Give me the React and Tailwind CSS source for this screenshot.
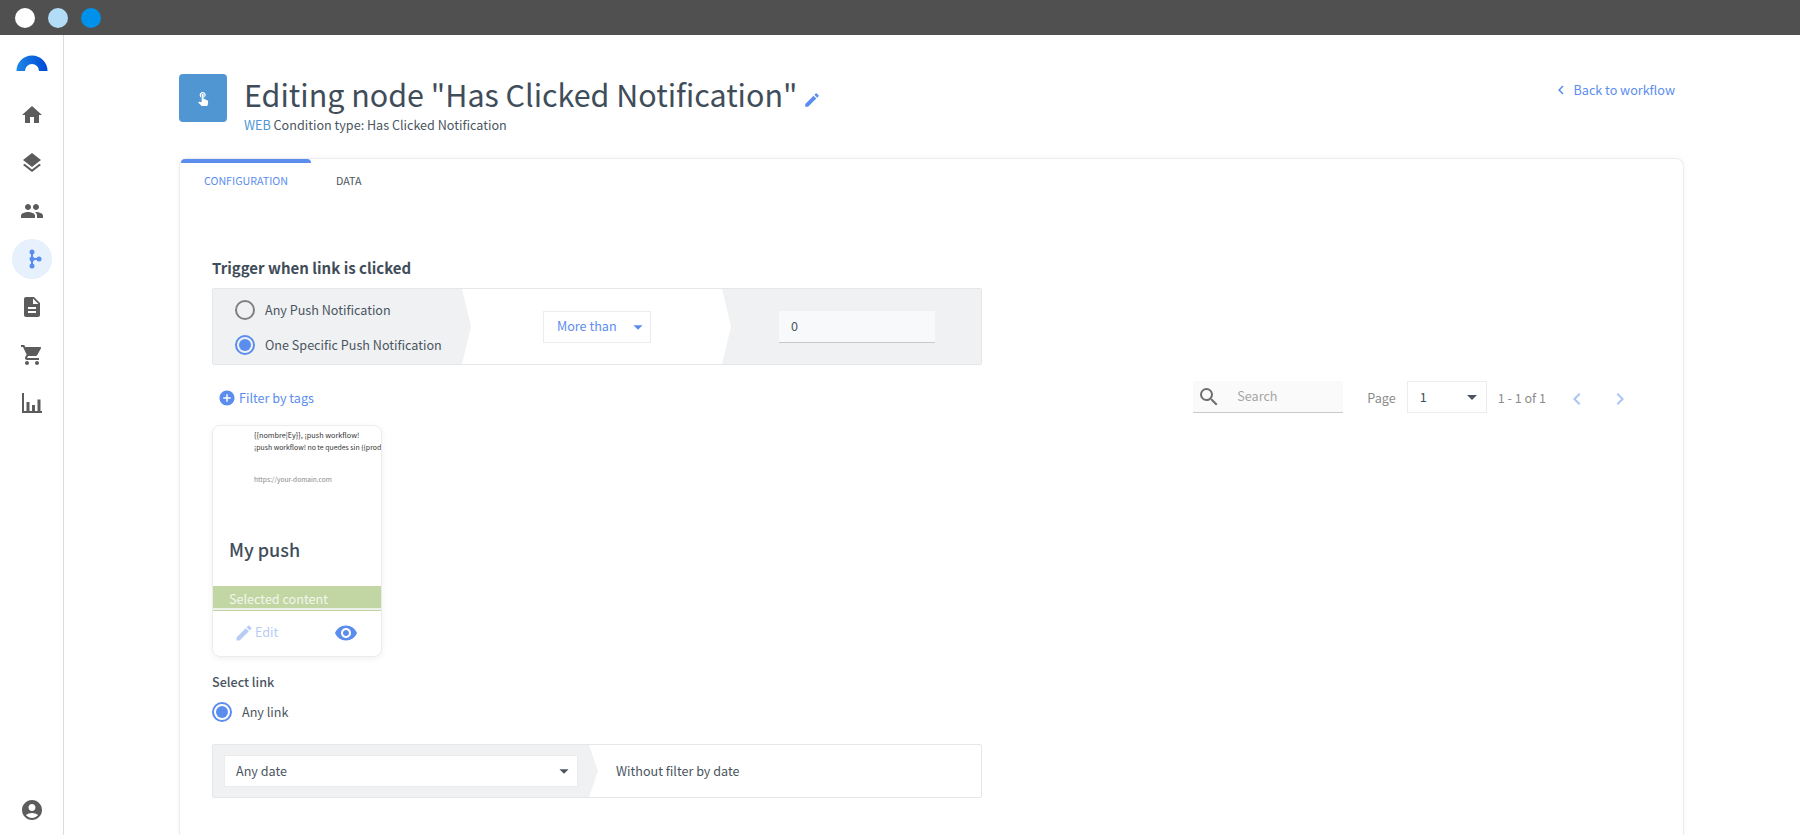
import React from "react";
import { MdHome, MdLayers, MdPeople, MdDescription, MdShoppingCart, MdAccountCircle, MdEdit, MdRemoveRedEye, MdAddCircle, MdSearch, MdChevronLeft, MdChevronRight, MdTouchApp, MdArrowDropDown } from "react-icons/md";

const Radio = ({ on }) => (
  <span className={`flex h-5 w-5 shrink-0 items-center justify-center rounded-full border-2 ${on ? "border-[#5b8def]" : "border-[#808080]"}`}>
    {on && <span className="h-3 w-3 rounded-full bg-[#5b8def]" />}
  </span>
);

const NavItem = ({ children, active }) => (
  <div className={`flex h-10 w-10 items-center justify-center rounded-full ${active ? "bg-[#e6f1fd]" : ""}`}>{children}</div>
);

const Tip = ({ color, back }) => (
  <div className={`w-[9px] shrink-0 ${back}`}>
    <div className={`h-full w-full ${color} [clip-path:polygon(0_0,100%_50%,0_100%)]`} />
  </div>
);

export default function App() {
  return (
    <div className="flex h-[835px] w-[1800px] flex-col overflow-hidden bg-white text-[12.6px] text-[#4a5560] [font-family:'Noto_Sans_CJK_SC','Noto_Sans',sans-serif]">
      <div className="flex h-[35px] shrink-0 items-center gap-[13px] bg-[#505050] pl-[15px]">
        <span className="h-5 w-5 rounded-full bg-white" />
        <span className="h-5 w-5 rounded-full bg-[#b3dcf7]" />
        <span className="h-5 w-5 rounded-full bg-[#0091ea]" />
      </div>
      <div className="flex min-h-0 flex-1">
        <aside className="flex w-[64px] shrink-0 flex-col items-center border-r border-[#dcdcdc] text-[#5c5c5c]">
          <svg width="32" height="16" viewBox="0 0 32 16" className="mt-[20px] mb-[24px] shrink-0">
            <defs>
              <linearGradient id="lg" x1="0" x2="1" y1="0" y2="0">
                <stop offset="0" stopColor="#1e88e5" />
                <stop offset="1" stopColor="#0047d6" />
              </linearGradient>
            </defs>
            <path d="M0.5 16A15.5 15.5 0 0 1 31.5 16H23A7 7 0 0 0 9 16Z" fill="url(#lg)" />
          </svg>
          <div className="flex flex-1 flex-col items-center gap-2">
            <NavItem><MdHome size={24} /></NavItem>
            <NavItem><MdLayers size={24} /></NavItem>
            <NavItem><MdPeople size={24} /></NavItem>
            <NavItem active>
              <svg width="20" height="20" viewBox="0 0 20 20" fill="#5b8def" stroke="#5b8def">
                <path d="M10 3V17M10 10H17" strokeWidth="2" fill="none" />
                <circle cx="10" cy="3" r="2.5" stroke="none" />
                <circle cx="10" cy="10" r="2.5" stroke="none" />
                <circle cx="10" cy="17" r="2.5" stroke="none" />
                <circle cx="17" cy="10" r="2.5" stroke="none" />
              </svg>
            </NavItem>
            <NavItem><MdDescription size={24} /></NavItem>
            <NavItem><MdShoppingCart size={24} /></NavItem>
            <NavItem>
              <svg width="20" height="20" viewBox="0 0 20 20" fill="currentColor">
                <path d="M0 0H2V18H20V20H0Z" />
                <path d="M4.5 9H7.5V18H4.5ZM10 12H13V18H10ZM15.5 6.5H18.5V18H15.5Z" />
              </svg>
            </NavItem>
          </div>
          <div className="mb-[5px]"><NavItem><MdAccountCircle size={24} /></NavItem></div>
        </aside>
        <main className="flex min-w-0 flex-1 flex-col pr-[116px] pl-[115px]">
          <header className="flex shrink-0 items-start pt-[39px]">
            <div className="flex h-12 w-12 shrink-0 items-center justify-center rounded-[4px] bg-[#5096d3] text-white"><MdTouchApp size={16} /></div>
            <div className="ml-[17px] min-w-0 flex-1">
              <div className="-mt-[2px] flex items-center">
                <h1 className="text-[30.45px] leading-[44px] font-normal whitespace-nowrap text-[#3f4d5a]">Editing node "Has Clicked Notification"</h1>
                <MdEdit size={18} className="mt-[12px] ml-[6px] text-[#5b8def]" />
              </div>
              <div className="leading-[18px]"><span className="text-[#5096d3]">WEB</span> Condition type: Has Clicked Notification</div>
            </div>
            <div className="flex items-center pt-[7px] pr-[9px] text-[#5b8def]">
              <MdChevronLeft size={18} className="mr-[4px]" />
              <span>Back to workflow</span>
            </div>
          </header>
          <section className="mt-[24px] min-h-0 flex-1 rounded-t-[8px] border border-b-0 border-[#ececec] pl-[32px] shadow-[0_0_6px_rgba(0,0,0,0.04)]">
            <nav className="-ml-[31px] flex h-[44px] items-start text-[10.7px] leading-[36px]">
              <div className="flex h-full w-[130px] justify-center rounded-t-[4px] border-t-4 border-[#5b8def] text-[#5b8def]">CONFIGURATION</div>
              <div className="mt-[4px] pl-[25px] text-[#4a5560]">DATA</div>
            </nav>
            <h2 className="mt-[54px] text-[15px] leading-[22px] font-bold text-[#3f4d5a]">Trigger when link is clicked</h2>
            <div className="mt-[9px] flex h-[77px] w-[770px] overflow-hidden rounded-[2px] border border-[#e4e6e8]">
              <div className="flex w-[249px] shrink-0 flex-col justify-center gap-[15px] bg-[#f0f1f3] pt-[2px] pl-[22px]">
                <label className="flex items-center gap-[10px]"><Radio /><span className="leading-5">Any Push Notification</span></label>
                <label className="flex items-center gap-[10px]"><Radio on /><span className="leading-5">One Specific Push Notification</span></label>
              </div>
              <Tip color="bg-[#f0f1f3]" back="bg-white" />
              <div className="flex w-[251px] shrink-0 items-center justify-center bg-white pl-[1px]">
                <div className="flex h-[32px] w-[108px] items-center border border-[#ececec] pl-[13px] text-[#5b8def]">
                  <span className="flex-1">More than</span>
                  <MdArrowDropDown size={22} className="mr-[1px]" />
                </div>
              </div>
              <Tip color="bg-white" back="bg-[#f0f1f3]" />
              <div className="flex flex-1 items-center bg-[#f0f1f3] pl-[48px]">
                <div className="flex h-[32px] w-[156px] items-center border-b border-[#c8c8c8] bg-[#f8f9fa] pl-[12px]">0</div>
              </div>
            </div>
            <div className="mt-[15px] flex h-[34px] w-[1420px] items-center justify-between">
              <div className="mt-[2px] flex items-center pl-[6px] text-[#5b8def]">
                <MdAddCircle size={18} />
                <span className="ml-[3px]">Filter by tags</span>
              </div>
              <div className="flex items-center">
                <div className="flex h-[32px] w-[150px] items-center border-b border-[#c8c8c8] bg-[#fafafa] pl-[4px] text-[#a5a5a5]">
                  <MdSearch size={24} className="text-[#6e6e6e]" />
                  <span className="ml-[16px]">Search</span>
                </div>
                <span className="mt-[2px] ml-[24px] text-[#8c8c8c]">Page</span>
                <div className="ml-[11px] flex h-[32px] w-[80px] items-center border border-[#ececec] pl-[12px] text-[#3f4d5a]">
                  <span className="flex-1">1</span>
                  <MdArrowDropDown size={24} className="mr-[2px] text-[#4a5560]" />
                </div>
                <span className="mt-[2px] ml-[11px] text-[#8c8c8c]">1 - 1 of 1</span>
                <MdChevronLeft size={24} className="mt-[3px] ml-[19px] text-[#a9c5f5]" />
                <MdChevronRight size={24} className="mt-[3px] ml-[19px] text-[#a9c5f5]" />
              </div>
            </div>
            <article className="mt-[11px] h-[232px] w-[170px] overflow-hidden rounded-[8px] border border-[#ececec] shadow-[0_2px_6px_rgba(0,0,0,0.06)]">
              <div className="h-[109px] pt-[3px] pl-[41px] text-[7.3px] leading-[12px] whitespace-nowrap text-[#333]">
                <div>{"{{nombre|Ey}}, ¡push workflow!"}</div>
                <div className="text-[6.9px]">¡push workflow! no te quedes sin {"{{producto}}"}</div>
                <div className="mt-[20px] text-[6.6px] text-[#888]">https://your-domain.com</div>
              </div>
              <div className="pl-[16px] text-[18px] leading-[28px] font-medium text-[#3f4d5a]">My push</div>
              <div className="mt-[23px] h-[25px] overflow-hidden border-b border-[#c1d6a3] bg-[#c1d6a3]">
                <div className="h-[22px] pl-[16px] text-[12.6px] leading-[26px] text-[#f4f7ee]">Selected content</div>
                <div className="h-[2px] bg-[#eef1ea]" />
              </div>
              <div className="flex h-[43px] items-center pr-[23px] pl-[21px]">
                <MdEdit size={20} className="text-[#b5cdf5]" />
                <span className="ml-[1px] flex-1 text-[#b5cdf5]">Edit</span>
                <MdRemoveRedEye size={24} className="text-[#5b8def]" />
              </div>
            </article>
            <div className="mt-[16px] leading-[18px] font-medium">Select link</div>
            <label className="mt-[11px] flex items-center gap-[10px]"><Radio on /><span className="leading-5">Any link</span></label>
            <div className="mt-[22px] flex h-[54px] w-[770px] overflow-hidden rounded-[2px] border border-[#e4e6e8]">
              <div className="flex w-[376px] shrink-0 items-center bg-[#f0f1f3] pl-[11px]">
                <div className="flex h-[32px] w-[354px] items-center border border-[#ececec] bg-white pl-[11px]">
                  <span className="flex-1">Any date</span>
                  <MdArrowDropDown size={22} className="mr-[2px]" />
                </div>
              </div>
              <Tip color="bg-[#f0f1f3]" back="bg-white" />
              <div className="flex flex-1 items-center pl-[18px]">Without filter by date</div>
            </div>
          </section>
        </main>
      </div>
    </div>
  );
}
